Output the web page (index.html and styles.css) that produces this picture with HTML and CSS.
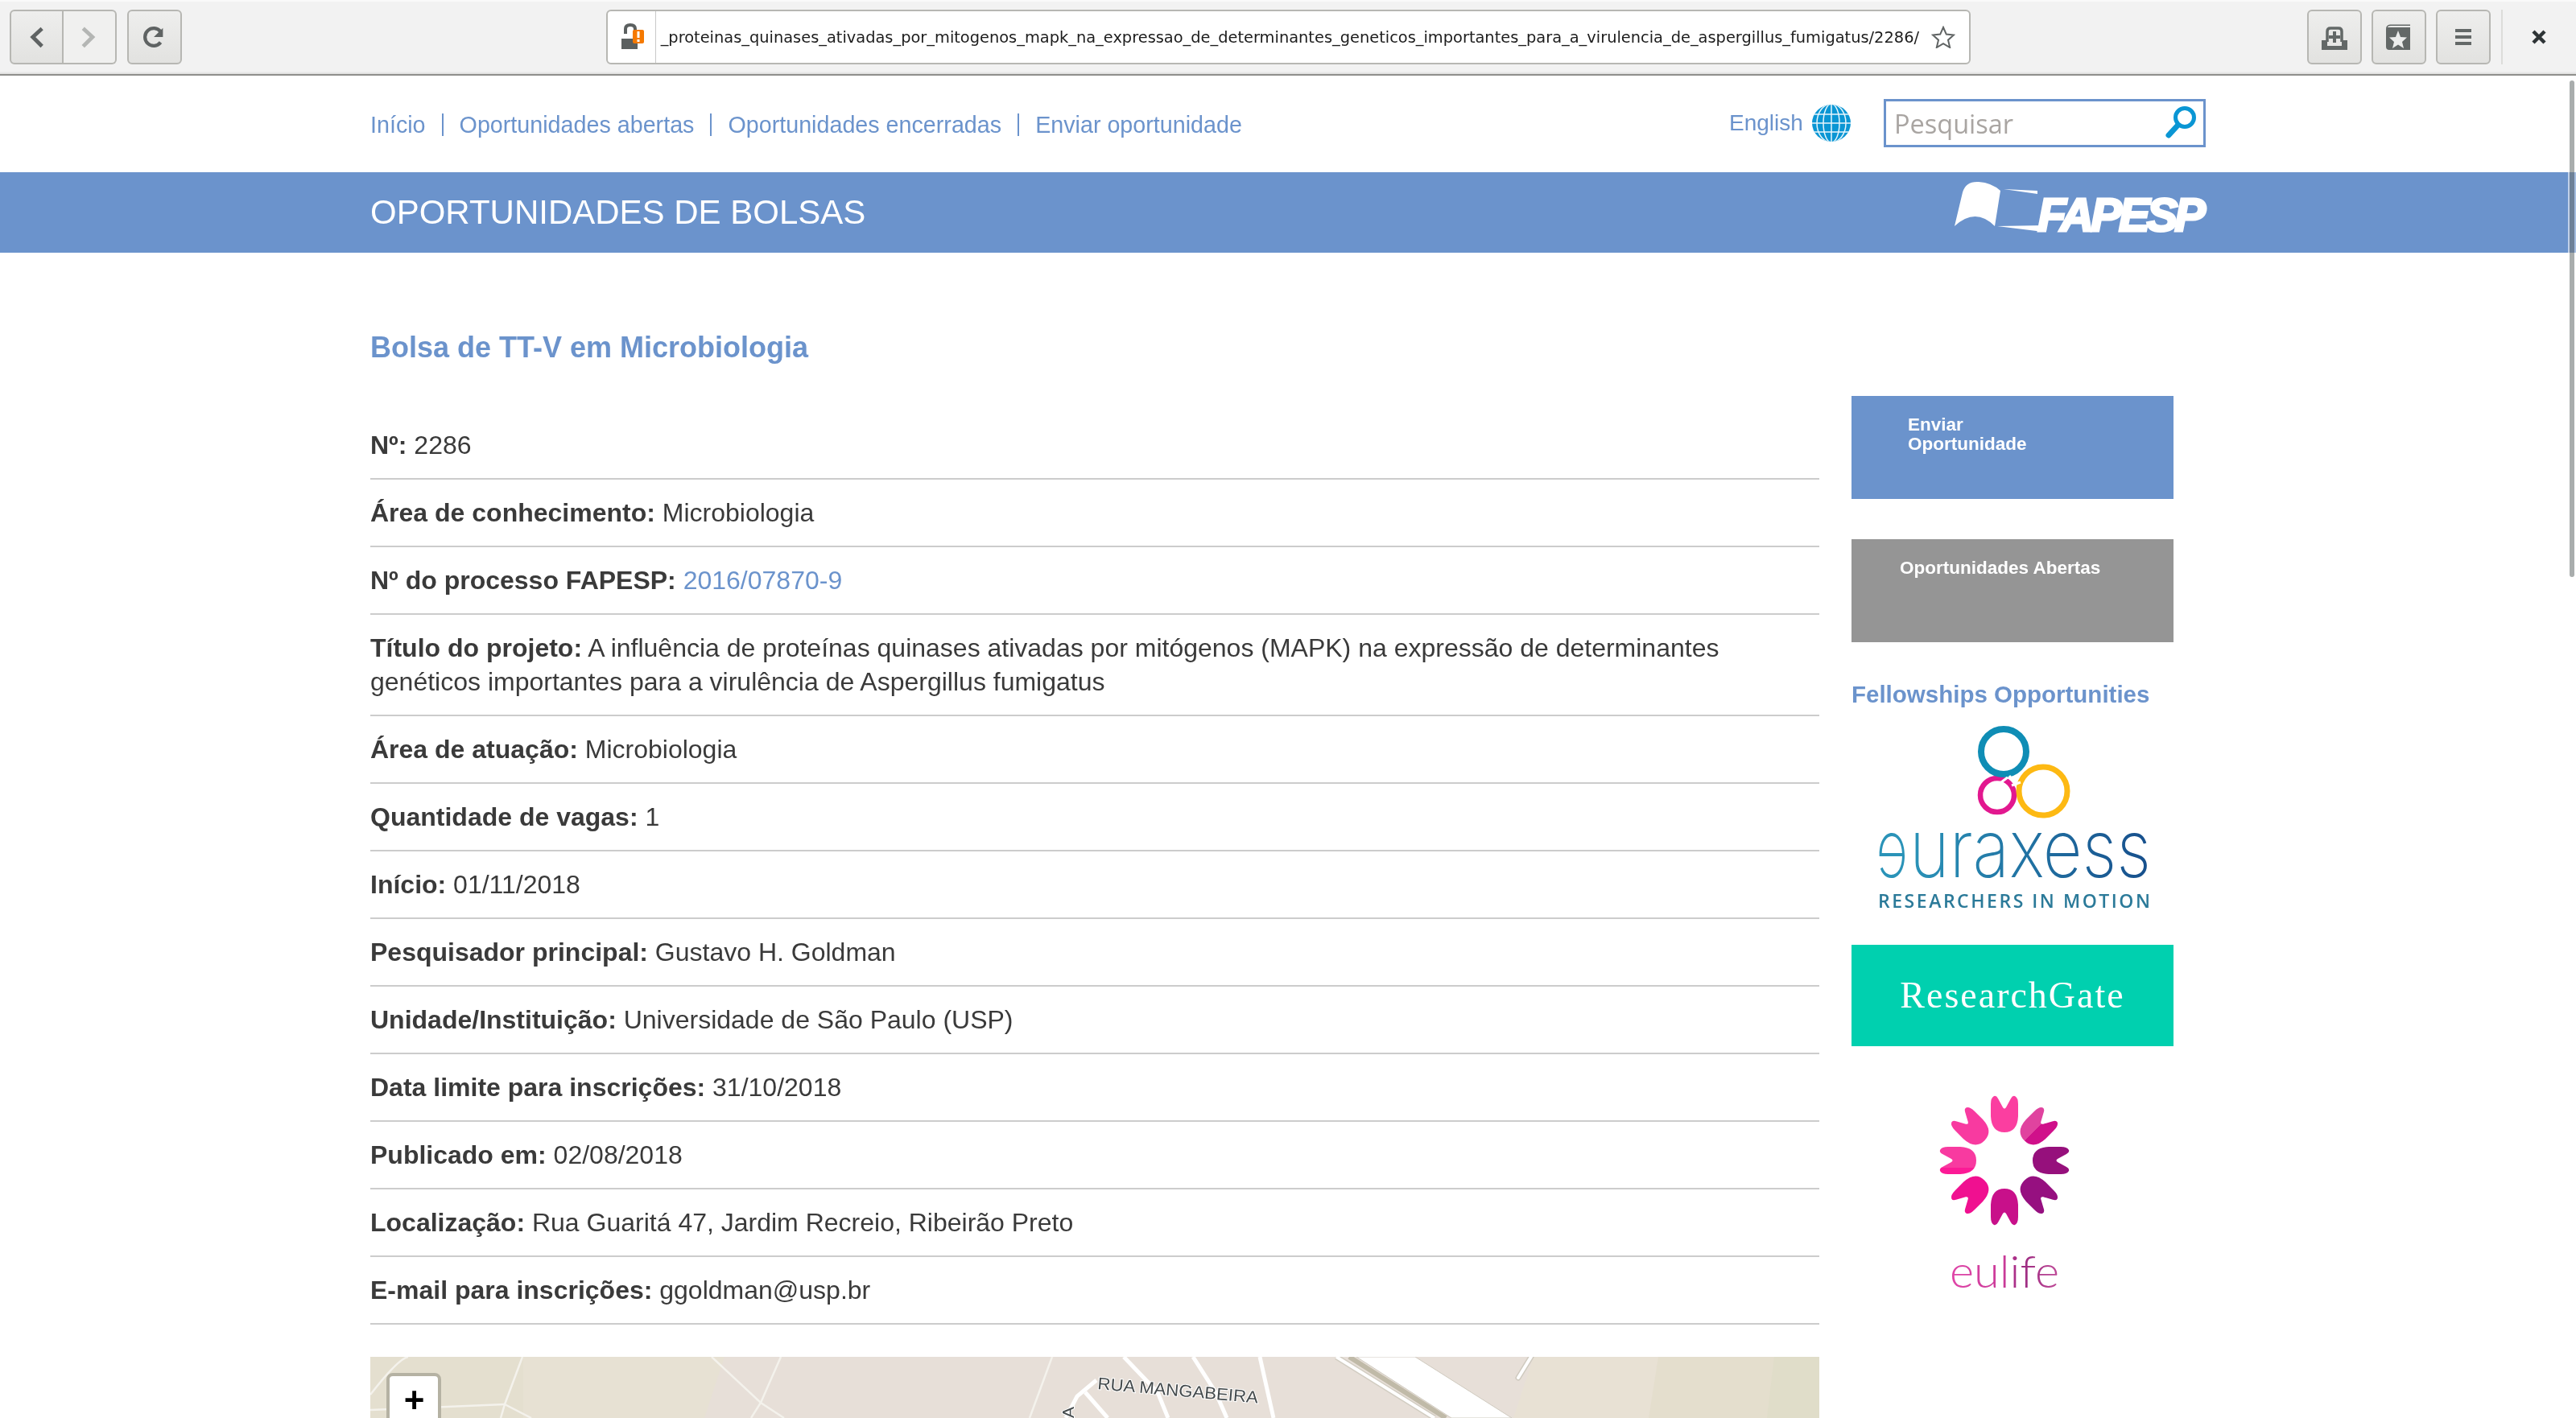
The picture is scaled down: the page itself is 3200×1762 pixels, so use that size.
FILE: index.html
```html
<!DOCTYPE html>
<html lang="pt">
<head>
<meta charset="utf-8">
<title>Bolsa de TT-V em Microbiologia</title>
<link rel="stylesheet" href="styles.css">
</head>
<body>
<header class="toolbar">
  <div class="group">
    <div class="btn-pair">
      <button class="tbtn left"><svg width="66" height="68" viewBox="0 0 66 68"><path d="M40 23 L28 34 L40 46" fill="none" stroke="#5f6363" stroke-width="5"/></svg></button>
      <button class="tbtn right"><svg width="66" height="68" viewBox="0 0 66 68"><path d="M25 23 L37 34 L25 46" fill="none" stroke="#b4b6b4" stroke-width="5"/></svg></button>
    </div>
    <button class="tbtn solo"><svg width="68" height="68" viewBox="0 0 68 68"><path d="M42 27 A11.500 11.500 0 1 0 42 41" fill="none" stroke="#5f6363" stroke-width="4.500"/><path d="M33 34 H45 V22 Z" fill="#5f6363"/></svg></button>
  </div>
  <div class="urlbar">
    <svg class="lock" width="30" height="34" viewBox="0 0 30 34"><path d="M5 13 V7 Q5 2 11 2 Q17 2 17 7 V10" fill="none" stroke="#5b6060" stroke-width="4"/><path d="M0 19 H20 V32 H0 Z" fill="#5b6060"/><rect x="14" y="8" width="14" height="17" rx="2" fill="#f57900"/><rect x="19.500" y="10" width="3" height="8" fill="#fff"/><rect x="19.500" y="20" width="3" height="3" fill="#fff"/></svg>
    <div class="urltext"><span>_proteinas_quinases_ativadas_por_mitogenos_mapk_na_expressao_de_determinantes_geneticos_importantes_para_a_virulencia_de_aspergillus_fumigatus/2286/</span></div>
    <svg class="star" width="30" height="28" viewBox="0 0 30 28"><path d="M15 2 L18.800 10.600 L28 11.500 L21 17.700 L23.200 27 L15 22.200 L6.800 27 L9 17.700 L2 11.500 L11.200 10.600 Z" fill="none" stroke="#5f6363" stroke-width="2"/></svg>
  </div>
  <div class="group tight">
    <button class="tbtn solo"><svg width="64" height="64" viewBox="2 2 64 64"><path d="M25 40 V27 Q25 23 29 23 H39 Q43 23 43 27 V40" fill="none" stroke="#636867" stroke-width="3.500"/><path d="M18 50 V38 H25 V45 H43 V38 H50 V50 Z" fill="#636867"/><path d="M34 28 V42 M27 35 H41" transform="translate(0,-1)" stroke="#636867" stroke-width="4"/></svg></button>
    <button class="tbtn solo"><svg width="64" height="64" viewBox="2 2 64 64"><path d="M18 24 Q18 19 23 18.500 H48 V20 H24 Q20 20 20 22 H48 V50 H22 Q18 50 18 46 Z" fill="#636867"/><path d="M33 26 L36 34 L44 34.500 L38 40 L40 48 L33 43.500 L26 48 L28 40 L22 34.500 L30 34 Z" fill="#ecedec"/></svg></button>
    <button class="tbtn solo"><svg width="64" height="64" viewBox="2 2 64 64"><path d="M24 26 H44 M24 34 H44 M24 42 H44" stroke="#636867" stroke-width="4"/></svg></button>
    <div class="vsep"></div>
    <svg class="close" width="20" height="20" viewBox="0 0 20 20"><path d="M3 3 L17 17 M17 3 L3 17" stroke="#2e3436" stroke-width="4.500"/></svg>
  </div>
</header>

<nav class="topnav">
  <ul class="links">
    <li><a href="#">Início</a></li>
    <li><a href="#">Oportunidades abertas</a></li>
    <li><a href="#">Oportunidades encerradas</a></li>
    <li><a href="#">Enviar oportunidade</a></li>
  </ul>
  <a class="lang" href="#">English
    <svg width="50" height="48" viewBox="0 0 50 48"><defs><clipPath id="g"><ellipse cx="25" cy="24" rx="24" ry="23"/></clipPath></defs><ellipse cx="25" cy="24" rx="24" ry="23" fill="#0a96d4"/><g clip-path="url(#g)" stroke="#e8f5fb" stroke-width="1.500" fill="none"><path d="M0 13 H50 M0 24 H50 M0 35 H50"/><path d="M25 0 V48"/><ellipse cx="25" cy="24" rx="10" ry="24"/><ellipse cx="25" cy="24" rx="18" ry="24"/></g></svg>
  </a>
  <div class="search">
    <span class="placeholder">Pesquisar</span>
    <svg width="44" height="46" viewBox="0 0 44 46"><circle cx="27" cy="16" r="11.500" fill="none" stroke="#0a96d4" stroke-width="5"/><path d="M18 26 L7 38" stroke="#0a96d4" stroke-width="7" stroke-linecap="round"/></svg>
  </div>
</nav>

<div class="band">
  <div class="band-title">OPORTUNIDADES DE BOLSAS</div>
  <div class="fapesp">
    <svg width="112" height="64" viewBox="0 0 112 64"><path d="M0 56 L10 14 Q14 0 30 1 Q46 2 57 12 L50 56 Q26 32 0 56 Z" fill="#fff"/><path d="M61 10 L103 12 L103 16 Z" fill="#fff"/><path d="M53 56 L112 55 L110 63 Z" fill="#fff"/></svg>
    <span>FAPESP</span>
  </div>
</div>

<div class="page">
  <main class="main">
    <h1 class="title">Bolsa de TT-V em Microbiologia</h1>
    <div class="row"><b>Nº:</b> 2286</div>
    <div class="row"><b>Área de conhecimento:</b> Microbiologia</div>
    <div class="row"><b>Nº do processo FAPESP:</b> <a href="#">2016/07870-9</a></div>
    <div class="row"><b>Título do projeto:</b> A influência de proteínas quinases ativadas por mitógenos (MAPK) na expressão de determinantes genéticos importantes para a virulência de Aspergillus fumigatus</div>
    <div class="row"><b>Área de atuação:</b> Microbiologia</div>
    <div class="row"><b>Quantidade de vagas:</b> 1</div>
    <div class="row"><b>Início:</b> 01/11/2018</div>
    <div class="row"><b>Pesquisador principal:</b> Gustavo H. Goldman</div>
    <div class="row"><b>Unidade/Instituição:</b> Universidade de São Paulo (USP)</div>
    <div class="row"><b>Data limite para inscrições:</b> 31/10/2018</div>
    <div class="row"><b>Publicado em:</b> 02/08/2018</div>
    <div class="row"><b>Localização:</b> Rua Guaritá 47, Jardim Recreio, Ribeirão Preto</div>
    <div class="row"><b>E-mail para inscrições:</b> ggoldman@usp.br</div>
    <div class="map">
      <svg width="1800" height="76" viewBox="0 0 1800 76">
        <rect width="1800" height="76" fill="#e7dfd8"/>
        <rect width="190" height="76" fill="#e4dfcf"/>
        <path d="M190 0 H440 L415 76 H190 Z" fill="#e7e1d3"/>
        <path d="M1445 0 H1800 V76 H1420 Z" fill="#e8e1d4"/>
        <path d="M1600 0 H1800 V76 H1588 Z" fill="#e4decd"/>
        <path d="M1744 0 H1800 V76 H1735 Z" fill="#e0ddc9"/>
        <g fill="none" stroke="#f4f2ec" stroke-width="2.500">
          <path d="M47 0 Q35 2 0 47"/><path d="M0 66 L167 59"/><path d="M189 0 L167 59 L162 76"/><path d="M167 59 L200 76"/>
          <path d="M424 0 L485 57 L514 76"/><path d="M510 0 L485 57 L473 76"/><path d="M847 0 L819 76"/>
        </g>
        <g fill="none" stroke="#fff" stroke-width="5">
          <path d="M936 0 L978 44 L991 76"/><path d="M1022 0 L1050 44 L1064 76"/><path d="M1105 0 L1122 76"/>
          <path d="M902 29 L878 49 L864 76"/><path d="M888 44 L916 76"/>
        </g>
        <path d="M1200 0 L1322 76" stroke="#d2cdc2" stroke-width="7" fill="none"/>
        <path d="M1200 0 L1322 76" stroke="#fff" stroke-width="4" fill="none"/>
        <path d="M1216 0 L1336 76" stroke="#c0baa8" stroke-width="6" fill="none"/>
        <path d="M1225 0 H1298 L1418 76 H1343 Z" fill="#fff" stroke="#cfcabf"/>
        <path d="M1442 0 L1426 26" stroke="#cfcabf" stroke-width="7" stroke-linecap="round" fill="none"/>
        <path d="M1442 0 L1426 26" stroke="#fff" stroke-width="4" stroke-linecap="round" fill="none"/>
        <text class="road" x="903" y="40" textLength="200" lengthAdjust="spacingAndGlyphs" transform="rotate(5 903 40)">RUA MANGABEIRA</text>
        <text class="road" x="0" y="0" transform="translate(874,76) rotate(-90)">A</text>
      </svg>
      <div class="zoom">+</div>
    </div>
  </main>
  <aside class="side">
    <a class="cta blue" href="#">Enviar<br>Oportunidade</a>
    <a class="cta grey" href="#">Oportunidades Abertas</a>
    <h2 class="side-title">Fellowships Opportunities</h2>
    <svg class="logo" width="400" height="290" viewBox="0 0 400 290">
      <defs><linearGradient id="ex" x1="0" x2="1" y1="0" y2="0"><stop offset="0" stop-color="#2a93b8"/><stop offset="1" stop-color="#174f8c"/></linearGradient></defs>
      <circle cx="181" cy="104" r="21" fill="none" stroke="#e2188f" stroke-width="6.500"/>
      <circle cx="238" cy="99" r="30" fill="none" stroke="#fdb913" stroke-width="7"/>
      <circle cx="189" cy="50" r="28" fill="none" stroke="#0f8db5" stroke-width="8"/>
      <path d="M196 80 L203 89 M194 82 L186 88 M210 88 L199 92" stroke="#fff" stroke-width="3" fill="none"/>
      <text class="ex-word" transform="translate(70,206) scale(-0.68,1)" fill="#2a93b8">e</text>
      <text class="ex-word" x="72" y="206" textLength="300" lengthAdjust="spacingAndGlyphs" fill="url(#ex)">uraxess</text>
      <text class="ex-sub" x="33" y="244" textLength="338" lengthAdjust="spacing">RESEARCHERS IN MOTION</text>
    </svg>
    <a class="rg" href="#">ResearchGate</a>
    <svg class="logo" width="400" height="330" viewBox="0 0 400 330">
      <defs>
        <path id="p" d="M-13 -80 Q-10 -81 -8 -77 L-2 -66 Q0 -63 2 -66 L8 -77 Q10 -81 13 -80 Q17 -78 17 -70 V-55 Q16 -35 0 -35 Q-16 -35 -17 -55 V-70 Q-17 -78 -13 -80 Z"/>
        <linearGradient id="eu" x1="0" x2="1" y1="0" y2="0"><stop offset="0" stop-color="#e045a8"/><stop offset="0.5" stop-color="#c93a98"/><stop offset="0.65" stop-color="#9a2a80"/><stop offset="1" stop-color="#c04a98"/></linearGradient>
        <linearGradient id="half" x1="0" x2="1" y1="0" y2="0"><stop offset="0.5" stop-color="#e0439f"/><stop offset="0.5" stop-color="#d0108a"/></linearGradient>
        <linearGradient id="low" x1="0" x2="1" y1="0" y2="0"><stop offset="0.25" stop-color="#fc1a96"/><stop offset="0.25" stop-color="#f83aa0"/></linearGradient>
      </defs>
      <g transform="translate(190,142)">
        <use href="#p" fill="#fb3ea0"/>
        <use href="#p" fill="url(#half)" transform="rotate(45)"/>
        <use href="#p" fill="#96107c" transform="rotate(90)"/>
        <use href="#p" fill="#961080" transform="rotate(135)"/>
        <use href="#p" fill="#c8108a" transform="rotate(180)"/>
        <use href="#p" fill="#f01090" transform="rotate(225)"/>
        <use href="#p" fill="url(#low)" transform="rotate(270)"/>
        <use href="#p" fill="#f83aa0" transform="rotate(315)"/>
      </g>
      <text class="eu-word" x="122" y="300" textLength="136" lengthAdjust="spacingAndGlyphs" fill="url(#eu)">eulife</text>
    </svg>
  </aside>
</div>
<div class="scroll-track"><div class="scroll-thumb"></div></div>
</body>
</html>
```
FILE: styles.css
```css
* { box-sizing: border-box; }
html, body { margin: 0; padding: 0; height: 1762px; overflow: hidden; background: #fff; }
body { font-family: "Liberation Sans", Arial, sans-serif; color: #3a3a3a; position: relative; }
a { color: #6b93cc; text-decoration: none; }

.toolbar { height: 94px; padding: 10px 0 0 12px; background: #f2f2f2; border-top: 2px solid #fafafa; border-bottom: 2px solid #8f8f8c; margin: 0; display: flex; align-items: flex-start; box-shadow: inset 0 -4px 3px -3px #d5d5d3; }
.group { display: flex; gap: 13px; width: 741px; }
.group.tight { width: auto; gap: 12px; margin-left: 418px; align-items: center; }
.btn-pair { display: flex; }
.tbtn { width: 68px; height: 68px; padding: 0; border: 2px solid #b7b7b3; border-radius: 6px; background: linear-gradient(#eeeeed, #e2e2e0); display: flex; align-items: center; justify-content: center; }
.tbtn.left { border-radius: 6px 0 0 6px; width: 67px; }
.tbtn.right { border-radius: 0 6px 6px 0; border-left: 0; width: 66px; background: #f0f0ef; }
.urlbar { width: 1695px; height: 68px; background: #fff; border: 2px solid #b7b7b3; border-radius: 6px; display: flex; align-items: center; padding: 0 0 0 17px; }
.lock { flex: none; }
.urltext { flex: none; width: 1570px; height: 64px; margin-left: 12px; border-left: 1px solid #c8c8c8; overflow: hidden; display: flex; justify-content: flex-end; align-items: center; font-family: "DejaVu Sans", sans-serif; font-size: 19.400px; color: #1c1c1c; white-space: nowrap; }
.star { flex: none; margin-left: 15px; }
.vsep { width: 2px; height: 68px; background: #dcdcda; margin-left: 1px; }
.close { margin-left: 23px; }

.topnav { height: 120px; padding: 0 0 0 460px; display: flex; align-items: center; }
.links { list-style: none; margin: 2px 0 0; padding: 0; display: flex; width: 1688px; font-size: 28.700px; }
.links li { padding: 0 20px; line-height: 28px; border-left: 2px solid #6b93cc; }
.links li:first-child { padding-left: 0; border-left: 0; }
.lang { display: flex; align-items: center; gap: 10px; font-size: 28px; width: 192px; margin-top: -2px; }
.search { width: 400px; height: 60px; margin-top: -2px; border: 3px solid #6b93cc; display: flex; align-items: center; justify-content: space-between; padding: 0 6px 0 10px; }
.placeholder { font-family: "Open Sans", sans-serif; font-size: 32.500px; color: #a9a5a2; }

.band { height: 100px; background: #6b93cc; padding: 0 460px; display: flex; justify-content: space-between; align-items: center; color: #fff; }
.band-title { font-size: 42px; }
.fapesp { display: flex; align-items: flex-end; height: 64px; margin-top: -14px; }
.fapesp span { font-size: 58px; font-weight: bold; font-style: italic; letter-spacing: -4px; line-height: 50px; margin: 0 4px -3px -9px; -webkit-text-stroke: 3px #fff; }
.fapesp svg { flex: none; }

.page { display: grid; grid-template-columns: 1800px 400px; gap: 40px; padding: 95px 0 0 460px; }
.title { margin: 2px 0 59px; font-size: 36px; line-height: 42px; font-weight: bold; color: #6b93cc; }
.row { font-size: 32px; line-height: 42px; padding: 20px 0; border-bottom: 2px solid #ccc; }
.map { position: relative; margin-top: 40px; height: 76px; overflow: hidden; }
.map svg { display: block; }
.road { font-family: "Liberation Sans Narrow", "Liberation Sans", sans-serif; font-size: 21px; fill: #444a4c; stroke: #fff; stroke-width: 2px; paint-order: stroke; }
.zoom { position: absolute; left: 20px; top: 20px; width: 68px; height: 76px; background: #fff; border: 4px solid #b5b2a3; border-radius: 8px; padding-left: 1px; font-size: 44px; line-height: 60px; font-weight: bold; color: #000; text-align: center; }

.side { display: flex; flex-direction: column; padding-top: 83px; }
.cta { display: block; height: 128px; font-size: 22.500px; line-height: 24px; font-weight: bold; color: #fff; }
.cta.blue { background: #6b93cc; padding: 24px 0 0 70px; margin-bottom: 50px; }
.cta.grey { background: #959595; padding: 24px 0 0 60px; margin-bottom: 44px; }
.side-title { margin: 0; font-size: 29.500px; line-height: 42px; font-weight: bold; color: #6b93cc; }
.logo { display: block; flex: none; }
.ex-word { font-family: Inter, sans-serif; font-weight: 200; font-size: 100px; }
.ex-sub { font-family: "Open Sans", sans-serif; font-weight: 600; font-size: 23px; fill: #2b7a99; }
.rg { display: flex; height: 126px; padding-bottom: 2px; background: #00d0af; color: #fff; font-family: "Liberation Serif", serif; font-size: 46px; letter-spacing: 2px; align-items: center; justify-content: center; }
.eu-word { font-family: Lato, sans-serif; font-weight: 300; font-size: 56px; }

.scroll-track { position: absolute; right: 0; top: 94px; bottom: 0; width: 10px; background: rgba(255,255,255,.4); border-left: 2px solid rgba(255,255,255,.3); }
.scroll-thumb { position: absolute; left: 0; top: 6px; width: 6px; height: 617px; border-radius: 3px; background: #a9adad; mix-blend-mode: multiply; }
```
